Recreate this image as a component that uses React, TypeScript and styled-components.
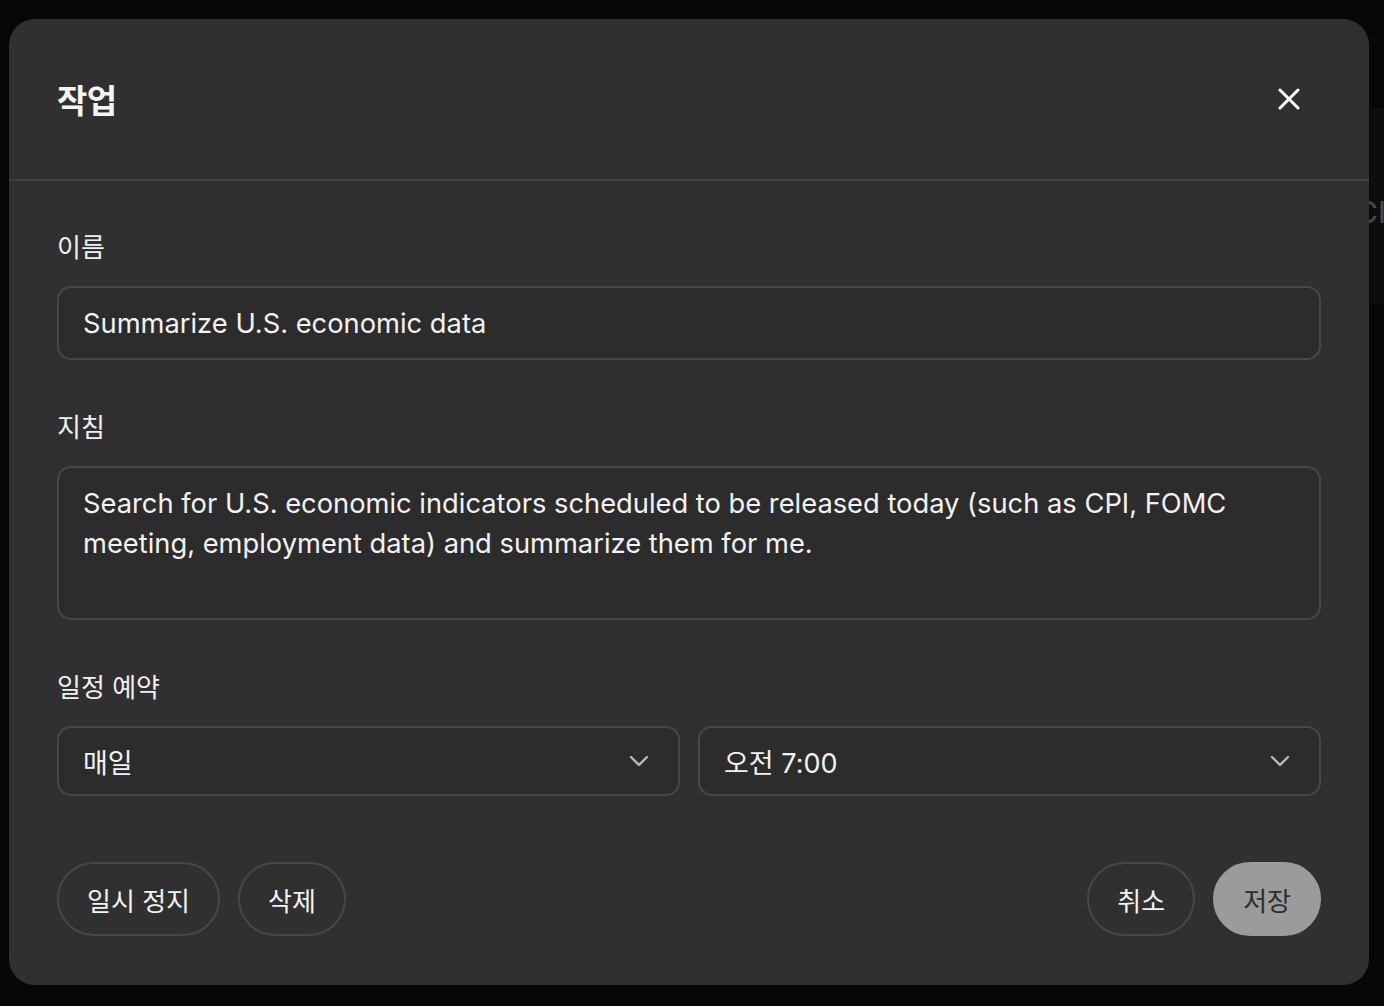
import React from 'react'
import styled, { createGlobalStyle } from 'styled-components'

const GlobalStyle = createGlobalStyle`
  html, body {
    margin: 0;
    padding: 0;
    background: #070707;
  }
  body {
    font-family: Inter, 'Noto Sans CJK KR', sans-serif;
    color: #f2f2f2;
    -webkit-font-smoothing: antialiased;
  }
  * {
    box-sizing: border-box;
  }
`

const Page = styled.div`
  position: relative;
  width: 1384px;
  height: 1006px;
  padding: 19px 15px 0 9px;
  overflow: hidden;
`

/* page content behind the modal, only a sliver of it shows */
const Backdrop = styled.div`
  position: absolute;
  left: 1330px;
  top: 108px;
  width: 200px;
  height: 196px;
  background: #0d0d0d;
  color: #4a4a4a;
  font-size: 30px;
  line-height: 30px;
  padding-top: 89px;
  padding-left: 26px;
`

const Dialog = styled.section`
  position: relative;
  width: 1360px;
  height: 966px;
  background: #303030;
  border-radius: 26px;
  display: flex;
  flex-direction: column;
`

const Header = styled.header`
  height: 162px;
  display: flex;
  align-items: center;
  justify-content: space-between;
  padding: 0 58px 0 48px;
  border-bottom: 2px solid #434343;
`

const Title = styled.h2`
  margin: 0;
  font-size: 33px;
  font-weight: 700;
  letter-spacing: -0.5px;
  color: #f4f4f4;
`

const CloseButton = styled.button`
  width: 44px;
  height: 44px;
  border: none;
  background: transparent;
  padding: 0;
  display: flex;
  align-items: center;
  justify-content: center;
  cursor: pointer;
`

const Body = styled.div`
  flex: 1;
  padding: 52px 48px 49px;
  display: flex;
  flex-direction: column;
  gap: 53px;
`

const Field = styled.div`
  display: flex;
  flex-direction: column;
  gap: 23px;
`

const Label = styled.label`
  font-size: 26px;
  line-height: 30px;
  font-weight: 400;
  color: #f0f0f0;
`

const TextInput = styled.input`
  height: 74px;
  width: 100%;
  padding: 0 24px;
  background: #2c2c2c;
  border: 2px solid #474747;
  border-radius: 14px;
  color: #f2f2f2;
  font-family: inherit;
  font-size: 27.3px;
  outline: none;
`

const TextArea = styled.textarea`
  height: 154px;
  width: 100%;
  padding: 16px 24px;
  background: #2c2c2c;
  border: 2px solid #474747;
  border-radius: 14px;
  color: #f2f2f2;
  font-family: inherit;
  font-size: 27.3px;
  line-height: 40px;
  resize: none;
  outline: none;
  overflow: hidden;
`

const SelectRow = styled.div`
  display: grid;
  grid-template-columns: 1fr 1fr;
  gap: 18px;
`

const Select = styled.button`
  height: 70px;
  display: flex;
  align-items: center;
  justify-content: space-between;
  padding: 0 29px 0 24px;
  background: #2c2c2c;
  border: 2px solid #474747;
  border-radius: 14px;
  color: #f2f2f2;
  font-family: inherit;
  font-size: 27px;
  cursor: pointer;
`

const Footer = styled.div`
  margin-top: 13px;
  display: flex;
  justify-content: space-between;
`

const ButtonGroup = styled.div`
  display: flex;
  gap: 18px;
`

const PillButton = styled.button<{ $primary?: boolean }>`
  height: 74px;
  min-width: 107px;
  padding: 0 28px;
  border-radius: 37px;
  border: 2px solid ${(p) => (p.$primary ? '#9b9b9b' : '#474747')};
  background: ${(p) => (p.$primary ? '#9b9b9b' : 'transparent')};
  color: ${(p) => (p.$primary ? '#2e2e2e' : '#f2f2f2')};
  font-family: inherit;
  font-size: 26px;
  font-weight: 400;
  cursor: pointer;
`

function Chevron() {
  return (
    <svg width="20" height="12" viewBox="0 0 20 12" fill="none">
      <path d="M2 2l8 8 8-8" stroke="#b8b8b8" strokeWidth="2.4" strokeLinecap="round" strokeLinejoin="round" />
    </svg>
  )
}

export default function App() {
  return (
    <Page>
      <GlobalStyle />
      <Backdrop>CI</Backdrop>
      <Dialog>
        <Header>
          <Title>작업</Title>
          <CloseButton aria-label="닫기">
            <svg width="22" height="22" viewBox="0 0 22 22" fill="none">
              <path d="M2 2l18 18M20 2L2 20" stroke="#ffffff" strokeWidth="3" strokeLinecap="round" />
            </svg>
          </CloseButton>
        </Header>
        <Body>
          <Field>
            <Label>이름</Label>
            <TextInput readOnly value="Summarize U.S. economic data" />
          </Field>
          <Field>
            <Label>지침</Label>
            <TextArea
              readOnly
              value="Search for U.S. economic indicators scheduled to be released today (such as CPI, FOMC meeting, employment data) and summarize them for me."
            />
          </Field>
          <Field>
            <Label>일정 예약</Label>
            <SelectRow>
              <Select>
                <span>매일</span>
                <Chevron />
              </Select>
              <Select>
                <span>오전 7:00</span>
                <Chevron />
              </Select>
            </SelectRow>
          </Field>
          <Footer>
            <ButtonGroup>
              <PillButton>일시 정지</PillButton>
              <PillButton>삭제</PillButton>
            </ButtonGroup>
            <ButtonGroup>
              <PillButton>취소</PillButton>
              <PillButton $primary>저장</PillButton>
            </ButtonGroup>
          </Footer>
        </Body>
      </Dialog>
    </Page>
  )
}
